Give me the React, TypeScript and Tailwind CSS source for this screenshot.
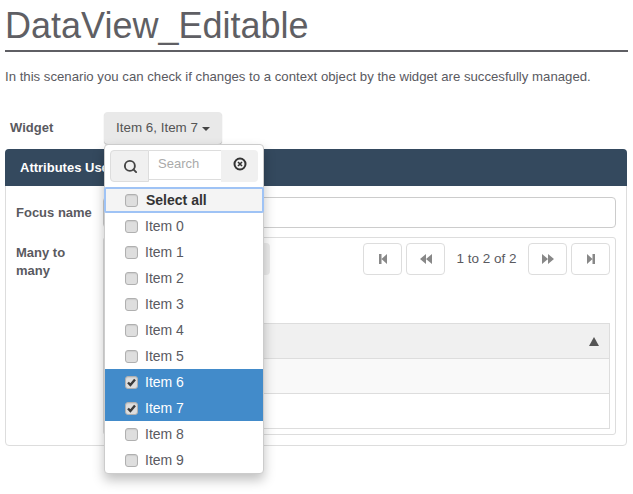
import { Search } from "lucide-react";

const items = ["Item 0", "Item 1", "Item 2", "Item 3", "Item 4", "Item 5", "Item 6", "Item 7", "Item 8", "Item 9"];

function Check({ checked }: { checked?: boolean }) {
  return (
    <span className="flex h-[13px] w-[13px] items-center justify-center rounded-[3px] border border-[#b0b0b0] bg-[#dedede] shadow-[inset_0_1px_1px_rgba(0,0,0,0.08)]">
      {checked && (
        <svg width="11" height="11" viewBox="0 0 11 11">
          <path d="M2 5.5 L4.4 8 L9 2.5" fill="none" stroke="#3a3a3a" strokeWidth="2.4" />
        </svg>
      )}
    </span>
  );
}

function PagerButton({ kind }: { kind: "first" | "prev" | "next" | "last" }) {
  return (
    <button className="flex h-[32px] w-[39px] items-center justify-center rounded-[4px] border border-[#ddd] bg-white">
      <svg width="12" height="12" viewBox="0 0 12 12" fill="#888">
        {kind === "first" && <path d="M2 1h2.5v10H2z M4.5 6l5.5-5v10z" />}
        {kind === "prev" && <path d="M0 6l6-5v10z M6 6l6-5v10z" />}
        {kind === "next" && <path d="M0 1l6 5-6 5z M6 1l6 5-6 5z" />}
        {kind === "last" && <path d="M2 1l5.5 5-5.5 5z M7.5 1H10v10H7.5z" />}
      </svg>
    </button>
  );
}

export default function App() {
  return (
    <div className="relative h-[494px] w-[633px] overflow-hidden bg-white px-[5px] font-['Liberation_Sans',Arial,sans-serif] text-[14px] text-[#5a5a5f]">
      <h1 className="h-[52px] border-b-2 border-[#5f5f64] pt-[6px] text-[36px] leading-[40px] text-[#5f5f64]">DataView_Editable</h1>
      <p className="mt-[16px] text-[13.2px] leading-[18px]">
        In this scenario you can check if changes to a context object by the widget are succesfully managed.
      </p>

      <div className="mt-[26px] flex h-[32px] items-center">
        <label className="w-[99px] pl-[5px] text-[13px] font-bold">Widget</label>
        <button className="flex h-[32px] w-[118px] items-center justify-center gap-[4px] rounded-[4px] bg-[#e9e9e9] text-[13.4px] text-[#555] shadow-[0_1px_1px_rgba(0,0,0,0.3)]">
          Item 6, Item 7
          <span className="mt-[2px] border-x-[4px] border-t-[4px] border-x-transparent border-t-[#444]" />
        </button>
      </div>

      <div className="mt-[5px] h-[297px] w-[622px] rounded-[4px] border border-[#ddd]">
        <div className="-mx-px -mt-px flex h-[37px] items-center rounded-t-[4px] bg-[#34495e] px-[15px] text-[13px] font-bold text-white">
          Attributes Used
        </div>
        <div className="flex items-center px-[10px] pt-[11px]">
          <label className="w-[87px] text-[13px] font-bold">Focus name</label>
          <div className="h-[31px] flex-1 rounded-[4px] border border-[#ccc] bg-white" />
        </div>
        <div className="flex px-[10px] pt-[9px]">
          <label className="w-[87px] pr-[20px] pt-[7px] text-[13px] font-bold leading-[18px]">Many to many</label>
          <div className="h-[198px] flex-1 rounded-[3px] border border-[#ddd] p-[5px]">
            <div className="flex items-center justify-between">
              <div className="h-[32px] w-[161px] rounded-[4px] bg-[#eeeeee]" />
              <div className="flex items-center gap-[4px]">
                <PagerButton kind="first" />
                <PagerButton kind="prev" />
                <span className="w-[75px] text-center text-[13.5px]">1 to 2 of 2</span>
                <PagerButton kind="next" />
                <PagerButton kind="last" />
              </div>
            </div>
            <div className="mt-[48px] border border-[#ddd]">
              <div className="flex h-[35px] items-center justify-end border-b border-[#ddd] bg-[#f0f0f0] pr-[10px]">
                <span className="border-x-[5px] border-b-[9px] border-x-transparent border-b-[#555]" />
              </div>
              <div className="h-[35px] border-b border-[#ddd] bg-[#f9f9f9]" />
              <div className="h-[34px] bg-white" />
            </div>
          </div>
        </div>
      </div>

      {/* dropdown laid over the panel */}
      <div className="absolute left-[104px] top-[144px] w-[160px] rounded-[4px] border border-[#ccc] bg-white shadow-[0_6px_12px_rgba(0,0,0,0.25)]">
        <div className="flex h-[42px] items-start px-[5px] pt-[5px]">
          <span className="flex h-[32px] w-[39px] items-center justify-center rounded-l-[4px] border border-[#ddd] bg-[#f0f0f0] pl-[2px]">
            <Search size={15} strokeWidth={3} className="text-[#444]" />
          </span>
          <span className="flex h-[30px] w-[72px] items-center border-y border-[#ddd] pb-[2px] pl-[9px] text-[13px] text-[#aaa]">Search</span>
          <span className="flex h-[32px] w-[37px] items-center justify-center rounded-r-[4px] bg-[#f0f0f0] pb-[5px]">
            <svg width="14" height="14" viewBox="0 0 14 14">
              <circle cx="7" cy="7" r="5.5" fill="none" stroke="#333" strokeWidth="2" />
              <path d="M5 5l4 4M9 5l-4 4" stroke="#333" strokeWidth="1.6" />
            </svg>
          </span>
        </div>
        <div className="-mx-px flex h-[26px] items-center gap-[8px] rounded-[2px] border-2 border-[#9fc3f5] bg-[#f4f4f4] pl-[19px] font-bold text-[#333]">
          <Check />
          Select all
        </div>
        {items.map((item) => {
          const on = item === "Item 6" || item === "Item 7";
          return (
            <div key={item} className={`flex h-[26px] items-center gap-[7px] pl-[20px] ${on ? "bg-[#428bca] text-white" : ""}`}>
              <Check checked={on} />
              {item}
            </div>
          );
        })}
      </div>
    </div>
  );
}
